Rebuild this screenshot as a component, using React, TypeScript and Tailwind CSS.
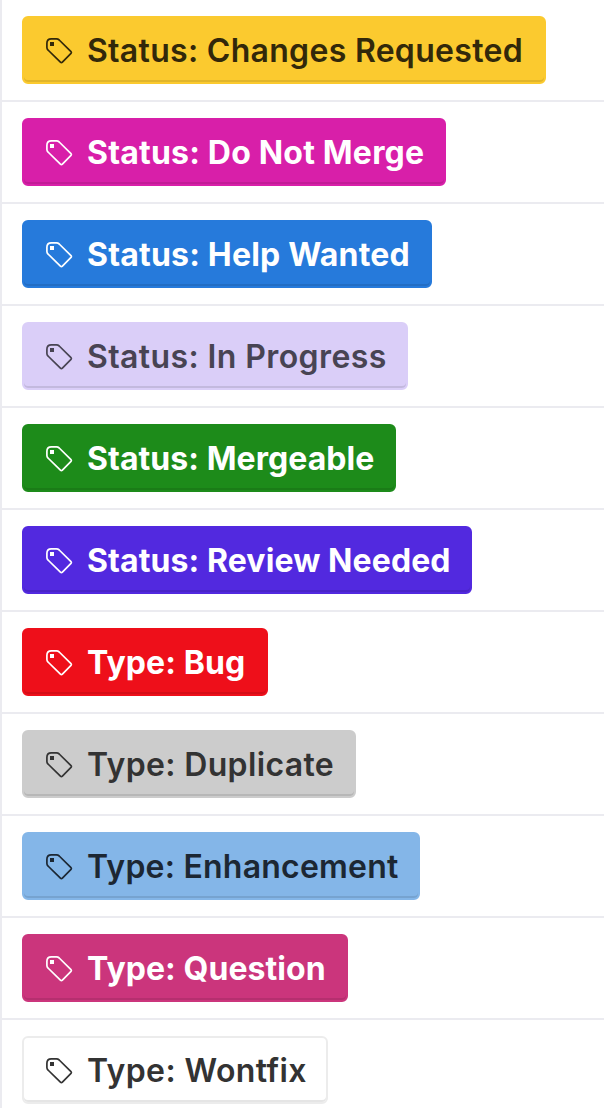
const labels = [
  { text: 'Status: Changes Requested', style: 'w-[524px] bg-[#fbca2f] border-[#fbca2f] text-[#32280a] font-semibold tracking-[0.3px]' },
  { text: 'Status: Do Not Merge', style: 'w-[424px] bg-[#d81fa9] border-[#d81fa9] text-white font-bold tracking-[0.2px]' },
  { text: 'Status: Help Wanted', style: 'w-[410px] bg-[#267adb] border-[#267adb] text-white font-bold tracking-[0.2px]' },
  { text: 'Status: In Progress', style: 'w-[386px] bg-[#dacef8] border-[#dacef8] text-[#484453] font-semibold tracking-[0.4px]' },
  { text: 'Status: Mergeable', style: 'w-[374px] bg-[#1d8b1a] border-[#1d8b1a] text-white font-bold tracking-[0.06px]' },
  { text: 'Status: Review Needed', style: 'w-[450px] bg-[#5229df] border-[#5229df] text-white font-bold tracking-[0.1px]' },
  { text: 'Type: Bug', style: 'w-[246px] bg-[#ee0f1a] border-[#ee0f1a] text-white font-bold tracking-[0.1px]' },
  { text: 'Type: Duplicate', style: 'w-[334px] bg-[#cccccc] border-[#cccccc] text-[#333333] font-semibold tracking-[0.35px]' },
  { text: 'Type: Enhancement', style: 'w-[398px] bg-[#84b6e8] border-[#84b6e8] text-[#1c2733] font-semibold tracking-[0.22px]' },
  { text: 'Type: Question', style: 'w-[326px] bg-[#cb357c] border-[#cb357c] text-white font-bold tracking-[0.06px]' },
  { text: 'Type: Wontfix', style: 'w-[306px] bg-white border-[#ececec] text-[#333333] font-semibold tracking-[0.4px]' },
];

function Tag() {
  return (
    <svg className="mt-0.5 mr-[14px] ml-[21px] h-7 w-7 shrink-0" viewBox="0 0 28 28" fill="none" stroke="currentColor" strokeWidth="1.7" strokeLinejoin="round">
      <path d="M1.9 6.3Q1.9 1.9 6.3 1.9H11.5Q13 1.9 14.2 3L26 14.6Q26.8 15.5 26 16.4L17.4 25.2Q16.4 26.2 15.4 25.2L3 13Q1.9 12 1.9 10.5Z" />
      <path d="M5 5h4v4H5z" fill="currentColor" stroke="none" />
    </svg>
  );
}

export default function App() {
  return (
    <div className="h-[1108px] overflow-hidden border-l-2 border-[#ebebf0] bg-white font-['Inter',sans-serif] text-[32px]">
      {labels.map((l) => (
        <div key={l.text} className="h-[102px] border-b-2 border-[#ebebf0] pt-4 pl-5">
          <div className={`flex h-[68px] items-center rounded-md border-2 whitespace-nowrap shadow-[inset_0_-2px_0_rgba(0,0,0,0.1)] ${l.style}`}>
            <Tag />
            <span className="pt-0.5">{l.text}</span>
          </div>
        </div>
      ))}
    </div>
  );
}
